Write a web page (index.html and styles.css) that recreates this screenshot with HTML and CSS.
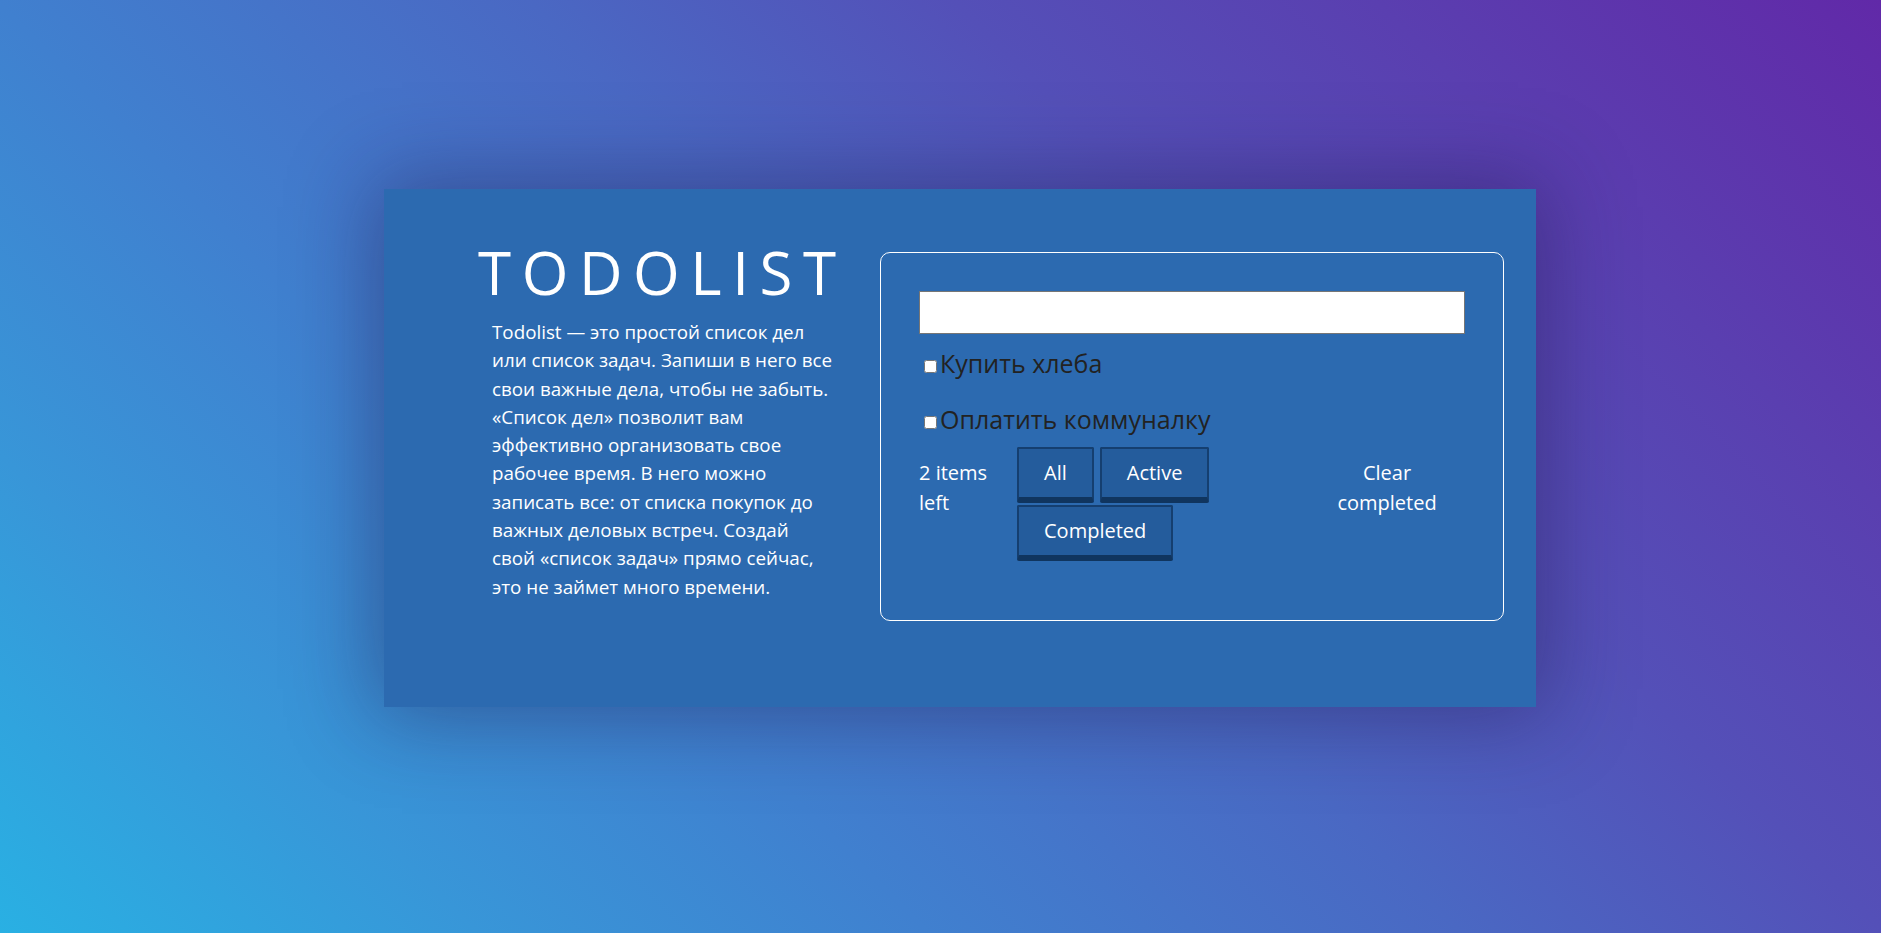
FILE: index.html
```html
<!DOCTYPE html>
<html lang="ru">
<head>
<meta charset="utf-8">
<title>Todolist</title>
<link rel="stylesheet" href="styles.css">
</head>
<body>
<main class="page">
  <section class="card">
    <div class="intro">
      <h1 class="title">TODOLIST</h1>
      <p class="desc">Todolist — это простой список дел<br>или список задач. Запиши в него все<br>свои важные дела, чтобы не забыть.<br>«Список дел» позволит вам<br>эффективно организовать свое<br>рабочее время. В него можно<br>записать все: от списка покупок до<br>важных деловых встреч. Создай<br>свой «список задач» прямо сейчас,<br>это не займет много времени.</p>
    </div>
    <div class="todo">
      <input class="new-todo" type="text">
      <ul class="list">
        <li class="item"><input type="checkbox" class="check"><span>Купить хлеба</span></li>
        <li class="item"><input type="checkbox" class="check"><span>Оплатить коммуналку</span></li>
      </ul>
      <div class="footer">
        <span class="count">2 items left</span>
        <div class="filters">
          <button class="filter">All</button>
          <button class="filter">Active</button>
          <button class="filter">Completed</button>
        </div>
        <button class="clear">Clear completed</button>
      </div>
    </div>
  </section>
</main>
</body>
</html>
```

FILE: styles.css
```css
html, body {
  margin: 0;
  height: 100%;
}
body {
  font-family: "Open Sans", "Noto Sans", sans-serif;
  background: linear-gradient(45deg, #29b0e3 0%, #3896d8 17%, #4080cf 33%, #4a68c3 52%, #5450b8 67%, #5a3fb0 82%, #6129a8 100%);
  overflow: hidden;
}
.page {
  padding: 189px 0 0 384px;
}
.card {
  box-sizing: border-box;
  width: 1152px;
  height: 518px;
  background: #2c6ab0;
  box-shadow: 0 0 80px 10px rgba(30, 20, 70, 0.4);
  display: flex;
  align-items: flex-start;
  padding: 42px 32px 0 94px;
  gap: 40px;
}
.intro {
  width: 362px;
  flex: none;
}
.title {
  margin: 0;
  color: #fff;
  font-size: 60px;
  font-weight: 400;
  letter-spacing: 10.6px;
  line-height: 82px;
  white-space: nowrap;
}
.desc {
  margin: 5px 0 0 14px;
  width: 348px;
  white-space: nowrap;
  color: #fff;
  font-size: 18.8px;
  line-height: 28.3px;
}
.todo {
  margin-top: 21px;
  flex: 1;
  box-sizing: border-box;
  border: 1px solid #fff;
  border-radius: 10px;
  padding: 38px 38px 59px;
}
.new-todo {
  display: block;
  box-sizing: border-box;
  width: 100%;
  height: 43px;
  margin: 0;
  border: 1px solid #767676;
  background: #fff;
}
.list {
  list-style: none;
  margin: 14px 0 0;
  padding: 0;
}
.item {
  font-size: 25px;
  line-height: 30px;
  color: #222;
  margin-bottom: 26px;
}
.item:last-child {
  margin-bottom: 13px;
}
.check {
  margin: 3px 3px 3px 5px;
}
.footer {
  display: flex;
  align-items: flex-start;
}
.count {
  width: 80px;
  margin-right: 18px;
  padding-top: 11px;
  color: #fff;
  font-size: 20px;
  line-height: 30px;
}
.filters {
  width: 200px;
  display: flex;
  flex-wrap: wrap;
  gap: 2px 6px;
}
.filter {
  font-family: inherit;
  font-size: 20px;
  line-height: 27px;
  color: #fff;
  background: #245c9c;
  border: 2px solid #153f70;
  border-bottom: 6px solid #10355f;
  border-radius: 2px;
  padding: 10px 25px 11px;
}
.clear {
  margin-left: auto;
  margin-right: 18px;
  width: 120px;
  padding: 11px 0 0;
  border: 0;
  background: transparent;
  color: #fff;
  font-family: inherit;
  font-size: 20px;
  line-height: 30px;
}
```
